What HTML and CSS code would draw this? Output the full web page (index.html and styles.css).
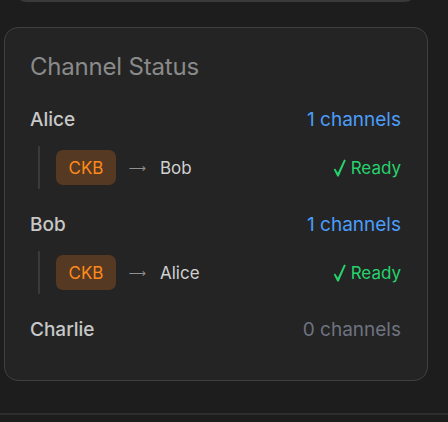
FILE: index.html
```html
<!DOCTYPE html>
<html lang="en">
<head>
<meta charset="utf-8">
<title>Channel Status</title>
<link rel="stylesheet" href="styles.css">
</head>
<body>
<div class="prev-card"></div>
<section class="card">
  <h2 class="title">Channel Status</h2>

  <div class="group">
    <div class="row">
      <span class="name">Alice</span>
      <span class="count">1 channels</span>
    </div>
    <div class="sub-list">
      <div class="sub-row">
        <span class="badge">CKB</span>
        <span class="arrow">⟶</span>
        <span class="target">Bob</span>
        <span class="status"><svg class="check" viewBox="0 0 14 20" aria-hidden="true"><path d="M0.6 11.6 L2.1 10.6 L5.2 15.4 L12.1 0.6 L14 1.3 L6.1 19.4 L4.6 19.4 Z"/></svg>Ready</span>
      </div>
    </div>
  </div>

  <div class="group">
    <div class="row">
      <span class="name">Bob</span>
      <span class="count">1 channels</span>
    </div>
    <div class="sub-list">
      <div class="sub-row">
        <span class="badge">CKB</span>
        <span class="arrow">⟶</span>
        <span class="target">Alice</span>
        <span class="status"><svg class="check" viewBox="0 0 14 20" aria-hidden="true"><path d="M0.6 11.6 L2.1 10.6 L5.2 15.4 L12.1 0.6 L14 1.3 L6.1 19.4 L4.6 19.4 Z"/></svg>Ready</span>
      </div>
    </div>
  </div>

  <div class="group">
    <div class="row">
      <span class="name">Charlie</span>
      <span class="count empty">0 channels</span>
    </div>
  </div>
</section>
<div class="footer"></div>
</body>
</html>
```

FILE: styles.css
```css
html, body {
  margin: 0;
  padding: 0;
  background: #1d1d1d;
  font-family: Inter, "Noto Sans", sans-serif;
  overflow: hidden;
}

.prev-card {
  box-sizing: border-box;
  height: 40px;
  margin: -38px 0 0 13px;
  width: 405px;
  border: 2px solid #3a3a3d;
  border-top: none;
  border-radius: 0 0 14px 14px;
  background: #242424;
}

.card {
  box-sizing: border-box;
  width: 424px;
  margin: 25px 0 0 4px;
  padding: 24px 26px 37px 25px;
  background: #242424;
  border: 1px solid #404044;
  border-radius: 14px;
}

.title {
  margin: 0 0 23px;
  font-size: 24px;
  line-height: 30px;
  font-weight: 400;
  letter-spacing: -0.2px;
  color: #8a8a8a;
}

.group + .group {
  margin-top: 21px;
}

.row {
  display: flex;
  justify-content: space-between;
  align-items: center;
  height: 28px;
  font-size: 19px;
}

.name {
  font-weight: 500;
  color: #c8c8c8;
}

.count {
  color: #4b9dfa;
}

.count.empty {
  color: #6e7380;
}

.sub-list {
  margin: 13px 0 0 8px;
  padding: 4px 0 4px 16px;
  border-left: 2px solid #3a3a3c;
}

.sub-row {
  display: flex;
  align-items: center;
  height: 35px;
  font-size: 17px;
}

.badge {
  display: flex;
  align-items: center;
  justify-content: center;
  width: 60px;
  height: 35px;
  border-radius: 7px;
  background: #553922;
  color: #ff8a1c;
}

.arrow {
  display: inline-block;
  width: 18px;
  margin-left: 12px;
  font-family: "DejaVu Sans", sans-serif;
  font-size: 12px;
  text-align: center;
  color: #909090;
  white-space: nowrap;
}

.target {
  margin-left: 14px;
  color: #d0d0d0;
}

.status {
  display: flex;
  align-items: center;
  margin-left: auto;
  color: #26d36c;
}

.check {
  width: 13px;
  height: 18px;
  margin: 1px 5px 0 0;
  fill: #26d36c;
}

.footer {
  margin-top: 32px;
  height: 20px;
  border-top: 2px solid #2e2e2e;
  background: #1d1d1d;
}
```
